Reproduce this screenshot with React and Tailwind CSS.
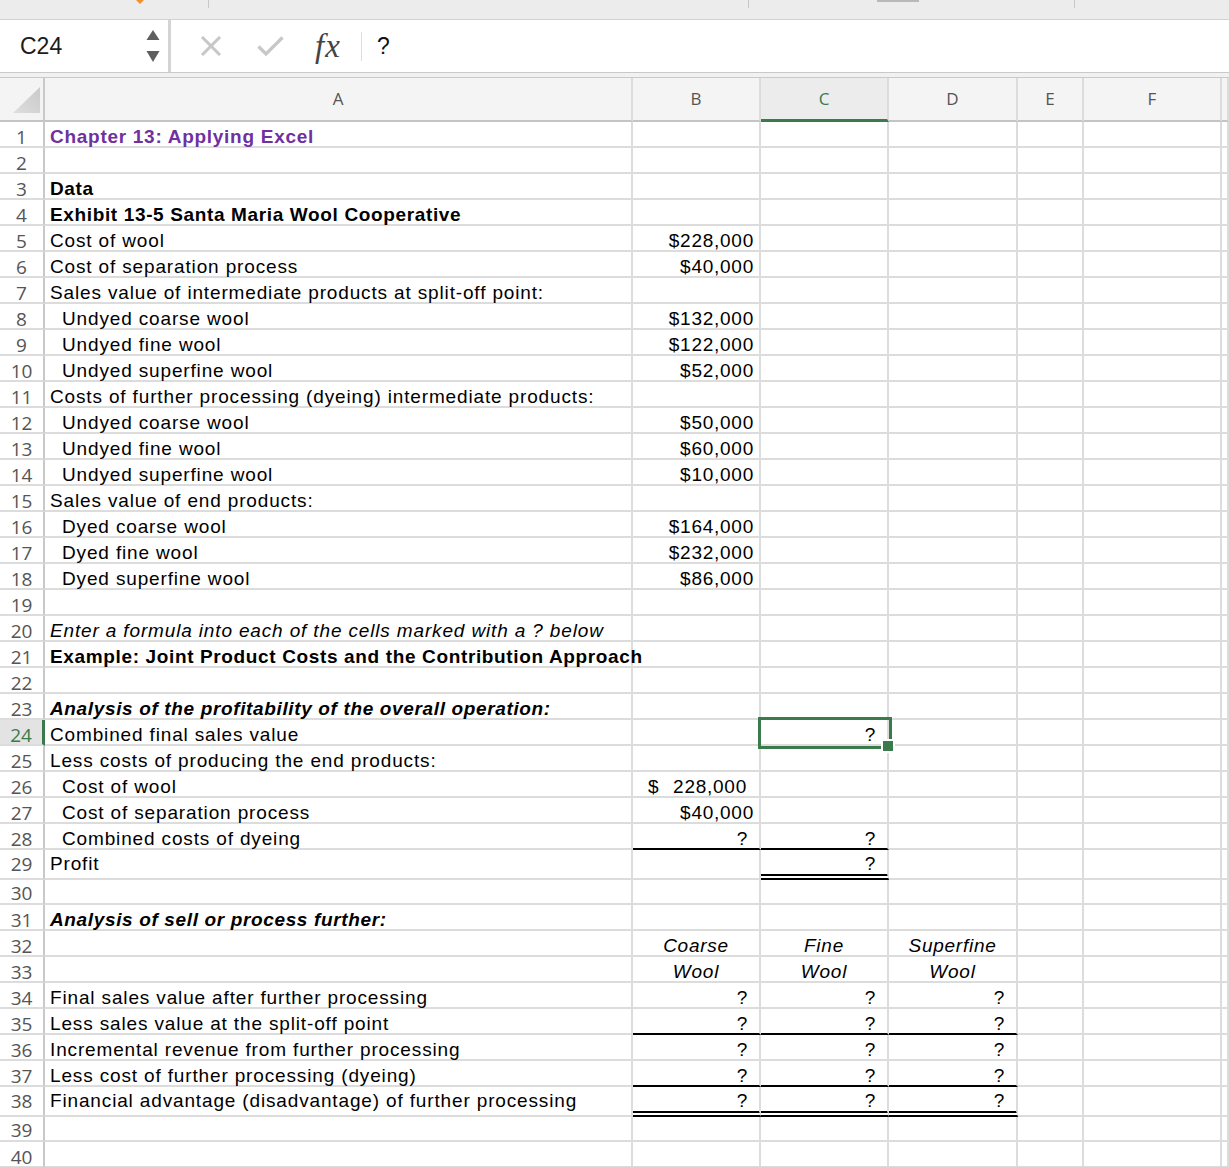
import React from 'react';

const num = (t) => ({ t, k: 'num' });
const Q = { t: '?', k: 'q' };
const hd = (t) => ({ t, k: 'hd' });

const rows = [
  { n: 1, a: 'Chapter 13: Applying Excel', s: 'purple' },
  { n: 2 },
  { n: 3, a: 'Data', s: 'bold' },
  { n: 4, a: 'Exhibit 13-5 Santa Maria Wool Cooperative', s: 'bold' },
  { n: 5, a: 'Cost of wool', b: num('$228,000') },
  { n: 6, a: 'Cost of separation process', b: num('$40,000') },
  { n: 7, a: 'Sales value of intermediate products at split-off point:' },
  { n: 8, a: 'Undyed coarse wool', ind: true, b: num('$132,000') },
  { n: 9, a: 'Undyed fine wool', ind: true, b: num('$122,000') },
  { n: 10, a: 'Undyed superfine wool', ind: true, b: num('$52,000') },
  { n: 11, a: 'Costs of further processing (dyeing) intermediate products:' },
  { n: 12, a: 'Undyed coarse wool', ind: true, b: num('$50,000') },
  { n: 13, a: 'Undyed fine wool', ind: true, b: num('$60,000') },
  { n: 14, a: 'Undyed superfine wool', ind: true, b: num('$10,000') },
  { n: 15, a: 'Sales value of end products:' },
  { n: 16, a: 'Dyed coarse wool', ind: true, b: num('$164,000') },
  { n: 17, a: 'Dyed fine wool', ind: true, b: num('$232,000') },
  { n: 18, a: 'Dyed superfine wool', ind: true, b: num('$86,000') },
  { n: 19 },
  { n: 20, a: 'Enter a formula into each of the cells marked with a ? below', s: 'italic' },
  { n: 21, a: 'Example: Joint Product Costs and the Contribution Approach', s: 'bold' },
  { n: 22 },
  { n: 23, a: 'Analysis of the profitability of the overall operation:', s: 'bolditalic' },
  { n: 24, a: 'Combined final sales value', c: Q, sel: true },
  { n: 25, a: 'Less costs of producing the end products:' },
  { n: 26, a: 'Cost of wool', ind: true, b: { k: 'acct', t: '228,000' } },
  { n: 27, a: 'Cost of separation process', ind: true, b: num('$40,000') },
  { n: 28, a: 'Combined costs of dyeing', ind: true, b: Q, c: Q, bbB: 'single', bbC: 'single' },
  { n: 29, a: 'Profit', c: Q, bbC: 'double', h: 'tall' },
  { n: 30, h: 'short' },
  { n: 31, a: 'Analysis of sell or process further:', s: 'bolditalic' },
  { n: 32, b: hd('Coarse'), c: hd('Fine'), d: hd('Superfine') },
  { n: 33, b: hd('Wool'), c: hd('Wool'), d: hd('Wool') },
  { n: 34, a: 'Final sales value after further processing', b: Q, c: Q, d: Q },
  { n: 35, a: 'Less sales value at the split-off point', b: Q, c: Q, d: Q, bbB: 'single', bbC: 'single', bbD: 'single' },
  { n: 36, a: 'Incremental revenue from further processing', b: Q, c: Q, d: Q },
  { n: 37, a: 'Less cost of further processing (dyeing)', b: Q, c: Q, d: Q, bbB: 'single', bbC: 'single', bbD: 'single' },
  { n: 38, a: 'Financial advantage (disadvantage) of further processing', b: Q, c: Q, d: Q, bbB: 'double', bbC: 'double', bbD: 'double', h: 'tall' },
  { n: 39, h: 'short' },
  { n: 40 },
];

const GRID = 'grid grid-rows-[100%] grid-cols-[45px_588px_128px_128px_129px_66px_138px_1fr]';

function bottomCls(bb) {
  if (bb === 'single') return 'border-b-2 border-b-black';
  if (bb === 'double') return 'border-b-[6px] border-b-black [border-bottom-style:double]';
  return 'border-b-2 border-b-[#dcdcdc]';
}

function padCls(h) {
  if (h === 'tall') return 'pt-[5px]';
  if (h === 'short') return 'pt-[4px]';
  return 'pt-[6px]';
}

function styleCls(s) {
  if (s === 'purple') return 'font-bold tracking-[0.72px] text-[#7030a0]';
  if (s === 'bold') return 'font-bold tracking-[0.64px]';
  if (s === 'italic') return 'italic tracking-[0.85px]';
  if (s === 'bolditalic') return 'font-bold italic tracking-[0.64px]';
  return 'tracking-[0.85px]';
}

function ValCell({ v, bb, h }) {
  const base = `flex items-start min-h-0 whitespace-nowrap tracking-[0.75px] border-r-2 border-r-[#dcdcdc] ${bottomCls(bb)} ${padCls(h)}`;
  if (!v) return <div className={base} />;
  if (v.k === 'num')
    return (
      <div className={`${base} justify-end pr-[5px]`}>
        <span>{v.t}</span>
      </div>
    );
  if (v.k === 'q')
    return (
      <div className={`${base} justify-end pr-[11px]`}>
        <span>?</span>
      </div>
    );
  if (v.k === 'acct')
    return (
      <div className={`${base} justify-between pl-[15px] pr-[12px]`}>
        <span>$</span>
        <span>{v.t}</span>
      </div>
    );
  return (
    <div className={`${base} justify-center italic`}>
      <span>{v.t}</span>
    </div>
  );
}

function Row({ r }) {
  const h = r.h === 'tall' ? 'h-[30px]' : r.h === 'short' ? 'h-[25px]' : 'h-[26px]';
  const rh = r.sel
    ? 'bg-[#e3e3e3] text-[#3b7a4b] border-r-[3px] border-r-[#3b7a4b]'
    : 'bg-white text-[#555555] border-r-2 border-r-[#c9c9c9]';
  return (
    <div className={`${GRID} ${h}`}>
      <div
        className={`flex items-start justify-center min-h-0 border-b-2 border-b-[#dcdcdc] font-['Open_Sans',sans-serif] text-[19px] leading-[18px] tracking-normal ${rh} ${padCls(r.h)}`}
      >
        {r.n}
      </div>
      <div
        className={`flex items-start min-h-0 whitespace-nowrap overflow-visible border-r-2 border-r-[#dcdcdc] border-b-2 border-b-[#dcdcdc] ${
          r.ind ? 'pl-[17px]' : 'pl-[5px]'
        } ${styleCls(r.s)} ${padCls(r.h)}`}
      >
        {r.a ? <span>{r.a}</span> : null}
      </div>
      <ValCell v={r.b} bb={r.bbB} h={r.h} />
      <ValCell v={r.c} bb={r.bbC} h={r.h} />
      <ValCell v={r.d} bb={r.bbD} h={r.h} />
      <ValCell h={r.h} />
      <ValCell h={r.h} />
      <ValCell h={r.h} />
    </div>
  );
}

function TopStrip() {
  return (
    <div className="flex h-[20px] items-start bg-[#ececec] border-b border-b-[#d2d2d2]">
      <svg className="ml-[136px]" width="8" height="4" viewBox="0 0 8 4">
        <polygon points="0,0 8,0 4,4" fill="#f0922c" />
      </svg>
      <div className="ml-[64px] w-px h-[8px] bg-[#c8c8c8]" />
      <div className="ml-[539px] w-px h-[8px] bg-[#c8c8c8]" />
      <div className="ml-[128px] w-[42px] h-[2px] bg-[#b9b9b9]" />
      <div className="ml-[155px] w-px h-[8px] bg-[#c8c8c8]" />
    </div>
  );
}

function FormulaBar() {
  return (
    <div className="flex h-[52px] bg-white">
      <div className="flex w-[171px] items-center justify-between pl-[20px] pr-[8px] border-r-[3px] border-r-[#d4d4d4] bg-white">
        <span className="font-['Liberation_Sans',Arial,sans-serif] text-[23px] text-[#1c1c1c] pt-[1px]">C24</span>
        <svg width="14" height="34" viewBox="0 0 14 34">
          <polygon points="0.5,11 7,1 13.5,11" fill="#5e5e5e" />
          <polygon points="0.5,22 13.5,22 7,33" fill="#5e5e5e" />
        </svg>
      </div>
      <div className="flex items-center">
        <svg className="ml-[29px]" width="22" height="20" viewBox="0 0 22 20">
          <path d="M2 1 L20 19 M20 1 L2 19" stroke="#c7c7c7" strokeWidth="3" fill="none" />
        </svg>
        <svg className="ml-[35px]" width="27" height="20" viewBox="0 0 27 20">
          <path d="M1.5 10.5 L9 18 L25.5 1.5" stroke="#c7c7c7" strokeWidth="3.2" fill="none" />
        </svg>
        <span className="ml-[31px] w-[32px] font-['Liberation_Serif',serif] italic text-[33px] leading-none text-[#444444] tracking-[1px]">
          fx
        </span>
        <div className="ml-[14px] w-px h-[29px] bg-[#dedede]" />
        <span className="ml-[15px] font-['Liberation_Sans',Arial,sans-serif] text-[23px] text-[#111]">?</span>
      </div>
    </div>
  );
}

function HeaderRow() {
  const cols = ['A', 'B', 'C', 'D', 'E', 'F', ''];
  return (
    <div className={`${GRID} h-[44px] font-['Open_Sans',sans-serif] text-[17px]`}>
      <div className="flex items-end justify-end pr-[3px] pb-[7px] bg-[#f4f4f4] border-r-2 border-r-[#c9c9c9] border-b-2 border-b-[#c4c4c4]">
        <svg width="27" height="26" viewBox="0 0 27 26">
          <defs>
            <linearGradient id="tri" x1="0" y1="1" x2="1" y2="0">
              <stop offset="0" stopColor="#dedede" />
              <stop offset="1" stopColor="#c9c9c9" />
            </linearGradient>
          </defs>
          <polygon points="27,0 27,26 0,26" fill="url(#tri)" />
        </svg>
      </div>
      {cols.map((c, i) =>
        c === 'C' ? (
          <div
            key={i}
            className="flex items-center justify-center bg-[#ececec] text-[#3b7a4b] border-r-2 border-r-[#dcdcdc] border-b-[3px] border-b-[#3b7a4b]"
          >
            {c}
          </div>
        ) : (
          <div
            key={i}
            className="flex items-center justify-center bg-[#f4f4f4] text-[#555555] border-r-2 border-r-[#dcdcdc] border-b-2 border-b-[#c4c4c4]"
          >
            {c}
          </div>
        )
      )}
    </div>
  );
}

export default function App() {
  return (
    <div className="relative w-[1229px] h-[1167px] overflow-hidden bg-white">
      <TopStrip />
      <FormulaBar />
      <div className="h-[6px] bg-[#f1f1f1] border-t border-b border-[#c9c9c9]" />
      <HeaderRow />
      <div className="font-['Liberation_Sans',Arial,sans-serif] text-[19px] leading-[18px] text-black">
        {rows.map((r) => (
          <Row key={r.n} r={r} />
        ))}
      </div>
      {/* selection of C24 */}
      <div className="absolute left-[758px] top-[717px] w-[134px] h-[32px] border-[3px] border-[#3b7a4b] pointer-events-none" />
      <div className="absolute left-[881px] top-[739px] w-[14px] h-[14px] bg-[#3b7a4b] border-2 border-white" />
    </div>
  );
}
